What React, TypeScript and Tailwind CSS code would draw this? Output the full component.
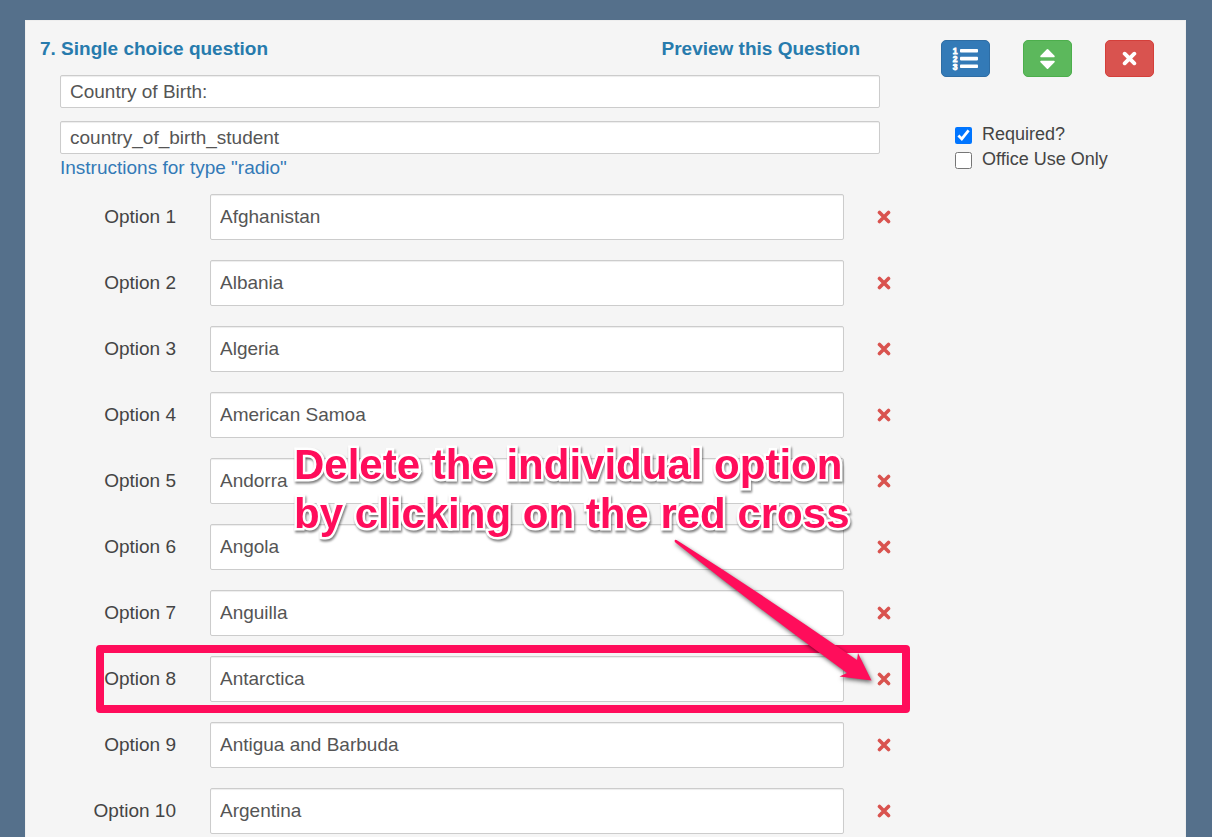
import React, { useState } from 'react';

const initialOptions = [
    'Afghanistan',
    'Albania',
    'Algeria',
    'American Samoa',
    'Andorra',
    'Angola',
    'Anguilla',
    'Antarctica',
    'Antigua and Barbuda',
    'Argentina',
];

const HIGHLIGHTED = 7;

const inputClass =
    'rounded-xs border border-[#ccc] bg-white px-[9px] text-[#555] shadow-[inset_0_1px_1px_rgba(0,0,0,0.075)] focus:outline-none focus:border-[#66afe9]';

const CrossIcon = ({ size }: { size: number }) => (
    <svg width={size} height={size} viewBox="0 0 14 14" fill="none" aria-hidden="true">
        <path d="M2.500 2.500 L11.500 11.500 M11.500 2.500 L2.500 11.500" stroke="currentColor" strokeWidth="3.600" strokeLinecap="round" />
    </svg>
);

const SortIcon = () => (
    <svg width="15" height="20" viewBox="384 192 1024 1408" fill="currentColor" aria-hidden="true">
        <path d="M1408 1088q0 26-19 45l-448 448q-19 19-45 19t-45-19l-448-448q-19-19-19-45t19-45 45-19h896q26 0 45 19t19 45zm0-384q0 26-19 45t-45 19h-896q-26 0-45-19t-19-45 19-45l448-448q19-19 45-19t45 19l448 448q19 19 19 45z" />
    </svg>
);

const ListIcon = () => (
    <svg width="27" height="24" viewBox="0 0 27 24" fill="currentColor" aria-hidden="true">
        <g fontSize="8.500" fontWeight="bold" stroke="currentColor" strokeWidth="0.800" textAnchor="middle">
            <text x="3" y="7">1</text>
            <text x="3" y="15">2</text>
            <text x="3" y="23">3</text>
        </g>
        <rect x="8" y="2" width="18" height="3.600" rx="0.800" />
        <rect x="8" y="9.800" width="18" height="3.600" rx="0.800" />
        <rect x="8" y="17.500" width="18" height="3.600" rx="0.800" />
    </svg>
);

const Callout = () => (
    <div className="pointer-events-none absolute left-[254px] top-[246px]">
        <p className="whitespace-nowrap text-[42px] leading-[49px] font-bold text-[#ff0d5b] [-webkit-text-stroke:5px_white] [paint-order:stroke_fill] [stroke-linejoin:round] drop-shadow-[1px_2px_1px_rgba(0,0,0,0.5)]">
            Delete the individual option
            <br />
            by clicking on the red cross
        </p>
        <svg
            className="absolute left-[376px] top-[95px] drop-shadow-[1px_2px_2px_rgba(0,0,0,0.6)]"
            width="210"
            height="160"
            viewBox="0 0 210 160"
            aria-hidden="true"
        >
            <path
                d="M6.500 5 Q5 4 4.600 5.800 Q4.500 7 6 8 Q90 75 177 138 L169.500 141.500 L201.500 145.500 L188 118 L187 125 Q98 63 6.500 5 Z"
                fill="#ff0d5b"
            />
        </svg>
    </div>
);

const App = () => {
    const [question, setQuestion] = useState('Country of Birth:');
    const [name, setName] = useState('country_of_birth_student');
    const [options, setOptions] = useState(initialOptions);
    const [required, setRequired] = useState(true);
    const [officeOnly, setOfficeOnly] = useState(false);

    const updateOption = (index: number, value: string) => {
        setOptions(options.map((option, i) => (i === index ? value : option)));
    };

    const removeOption = (index: number) => {
        setOptions(options.filter((_, i) => i !== index));
    };

    return (
        <div className="flex min-h-screen bg-[#55708b] pt-5 pl-[25px] pr-[26px] font-['Liberation_Sans',Arial,sans-serif] text-[19px] text-[#444]">
            <div className="flex flex-1 border border-b-0 border-[#eee] bg-[#f5f5f5] pl-[14px] pr-[31px]">
                <div className="flex-1 min-w-0">
                    <div className="flex justify-between pt-[15px] pr-[35px] leading-[26px] font-bold text-[#277bad]">
                        <h2>7. Single choice question</h2>
                        <a href="#preview">Preview this Question</a>
                    </div>

                    <div className="mt-[13px] flex flex-col pl-5 pr-[15px]">
                        <input
                            type="text"
                            aria-label="Question"
                            value={question}
                            onChange={(e) => setQuestion(e.target.value)}
                            className={`h-[33px] w-full ${inputClass}`}
                        />
                        <input
                            type="text"
                            aria-label="Field name"
                            value={name}
                            onChange={(e) => setName(e.target.value)}
                            className={`mt-[13px] h-[33px] w-full ${inputClass}`}
                        />
                        <a href="#instructions" className="self-start leading-7 text-[#337ab7]">
                            Instructions for type "radio"
                        </a>
                    </div>

                    <div className="relative mt-3">
                        <ul className="flex flex-col gap-5">
                            {options.map((option, i) => (
                                <li key={i} className="relative flex items-center">
                                    <label htmlFor={`option-${i}`} className="w-[136px] text-right">
                                        Option {i + 1}
                                    </label>
                                    <input
                                        id={`option-${i}`}
                                        type="text"
                                        value={option}
                                        onChange={(e) => updateOption(i, e.target.value)}
                                        className={`ml-[34px] h-[46px] min-w-0 flex-1 ${inputClass}`}
                                    />
                                    <button
                                        type="button"
                                        aria-label={`Delete option ${i + 1}`}
                                        onClick={() => removeOption(i)}
                                        className="ml-[30px] mr-px flex w-5 justify-center text-[#d9534f]"
                                    >
                                        <CrossIcon size={14} />
                                    </button>
                                    {i === HIGHLIGHTED && (
                                        <div className="pointer-events-none absolute -top-[11px] -bottom-[11px] left-14 -right-[15px] rounded-sm border-8 border-[#ff0d5b]" />
                                    )}
                                </li>
                            ))}
                        </ul>
                        <Callout />
                    </div>
                </div>

                <div className="pl-[46px] pt-[19px]">
                    <div className="flex gap-[33px] text-white">
                        <button
                            type="button"
                            aria-label="Number options"
                            className="flex h-[37px] w-[49px] items-center justify-center rounded-[5px] border border-[#2e6da4] bg-[#337ab7]"
                        >
                            <ListIcon />
                        </button>
                        <button
                            type="button"
                            aria-label="Move question"
                            className="flex h-[37px] w-[49px] items-center justify-center rounded-[5px] border border-[#4cae4c] bg-[#5cb85c]"
                        >
                            <SortIcon />
                        </button>
                        <button
                            type="button"
                            aria-label="Delete question"
                            className="flex h-[37px] w-[49px] items-center justify-center rounded-[5px] border border-[#d43f3a] bg-[#d9534f]"
                        >
                            <CrossIcon size={15} />
                        </button>
                    </div>

                    <div className="mt-[45px] flex flex-col pl-[14px] text-[18px] leading-[25px]">
                        <label className="flex items-center gap-[10px]">
                            <input
                                type="checkbox"
                                checked={required}
                                onChange={(e) => setRequired(e.target.checked)}
                                className="mt-[2px] size-[17px]"
                            />
                            Required?
                        </label>
                        <label className="flex items-center gap-[10px]">
                            <input
                                type="checkbox"
                                checked={officeOnly}
                                onChange={(e) => setOfficeOnly(e.target.checked)}
                                className="mt-[2px] size-[17px]"
                            />
                            Office Use Only
                        </label>
                    </div>
                </div>
            </div>
        </div>
    );
};

export default App;
